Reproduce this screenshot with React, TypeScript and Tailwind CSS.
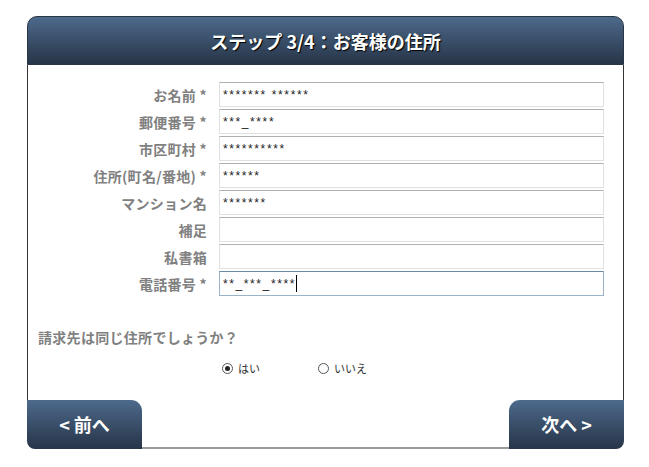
import React from 'react';

const fields = [
  { label: 'お名前 *', value: '******* ******' },
  { label: '郵便番号 *', value: '***_****' },
  { label: '市区町村 *', value: '**********' },
  { label: '住所(町名/番地) *', value: '******' },
  { label: 'マンション名', value: '*******' },
  { label: '補足', value: '' },
  { label: '私書箱', value: '' },
  { label: '電話番号 *', value: '**_***_****', focused: true },
];

const jp = { fontFamily: '"Noto Sans CJK JP", "Noto Sans", sans-serif' };

function Radio({ checked, label }: { checked?: boolean; label: string }) {
  return (
    <div className="flex items-center gap-[5px]">
      <span className="flex h-[11px] w-[11px] items-center justify-center rounded-full border border-[#555] bg-white">
        {checked && <span className="h-[5px] w-[5px] rounded-full bg-[#222]" />}
      </span>
      <span className="text-[11px] leading-none text-[#333]">{label}</span>
    </div>
  );
}

export default function App() {
  return (
    <div className="min-h-[467px] w-[649px] bg-white pl-[27px] pt-[16px]" style={jp}>
      <div className="flex w-[597px] flex-col">
        {/* Header */}
        <div className="flex h-[49px] items-center justify-center rounded-t-[10px] border border-[#2a3545] bg-gradient-to-b from-[#4d6a8c] to-[#273548] pt-[2px]">
          <h1 className="text-[18px] font-bold text-white [text-shadow:1px_1px_1px_#000]">ステップ 3/4：お客様の住所</h1>
        </div>

        {/* Body */}
        <div className="flex flex-col border-x border-[#333] pb-[26px] pt-[17px]">
          <div className="flex flex-col gap-[2px]">
            {fields.map((f) => (
              <div key={f.label} className="flex items-center">
                <label className="w-[180px] pr-[1px] text-right text-[14px] font-bold leading-none tracking-[0.3px] text-[#808080]">
                  {f.label}
                </label>
                <div
                  className={`ml-[11px] flex h-[25px] w-[385px] items-center border px-[3px] text-[12px] tracking-[1.6px] text-[#222] ${
                    f.focused
                      ? 'border-[#9bb3c8] border-t-[#6d8aa3]'
                      : 'border-[#e0e0e0] border-t-[#b0b0b0]'
                  }`}
                  style={{ fontFamily: '"Liberation Sans", Arial, sans-serif' }}
                >
                  {f.value}
                  {f.focused && <span className="h-[17px] w-px bg-black" />}
                </div>
              </div>
            ))}
          </div>

          <p className="mt-[31px] pl-[10px] text-[14px] font-bold tracking-[0.3px] text-[#808080]">請求先は同じ住所でしょうか？</p>

          <div className="mt-[15px] flex items-center gap-[58px] pl-[194px]">
            <Radio checked label="はい" />
            <Radio label="いいえ" />
          </div>
        </div>

        {/* Footer */}
        <div className="flex h-[49px] items-stretch">
          <button className="flex w-[115px] items-center justify-center rounded-bl-[8px] rounded-tr-[11px] bg-gradient-to-b from-[#4d6a8c] to-[#273548] text-[18px] font-bold text-white">
            &lt; 前へ
          </button>
          <div className="flex-1 border-b-2 border-[#9a9a9a]" />
          <button className="flex w-[115px] items-center justify-center rounded-br-[8px] rounded-tl-[11px] bg-gradient-to-b from-[#4d6a8c] to-[#273548] text-[18px] font-bold text-white">
            次へ &gt;
          </button>
        </div>
      </div>
    </div>
  );
}
